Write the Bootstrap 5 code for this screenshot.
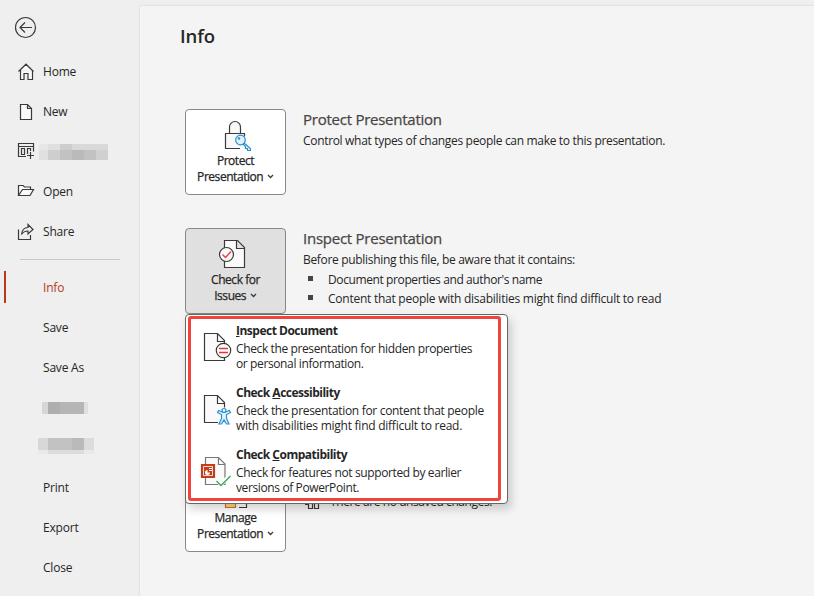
<!DOCTYPE html>
<html lang="en">
<head>
<meta charset="utf-8">
<meta name="viewport" content="width=device-width, initial-scale=1">
<title>Info</title>
<link href="https://cdn.jsdelivr.net/npm/bootstrap@5.3.0/dist/css/bootstrap.min.css" rel="stylesheet">
<style>
body{font-family:"Open Sans","Noto Sans",sans-serif;font-size:12px;line-height:16px;color:#262626;background:#efefef;letter-spacing:-.2px;height:596px;overflow:hidden}
svg{display:block;fill:none;stroke:#3b3a39;stroke-width:1.2;flex:none}
.side{width:140px;height:596px;flex:none}
.back{padding:16px 0 0 14px;height:52px}
.side .nav-link{height:40px;padding:0 0 0 17px;color:#262626;display:flex;align-items:center;gap:8px;line-height:16px}
.side .plain{padding-left:43px}
.side .active{color:#b7391a;position:relative}
.side .active::before{content:"";position:absolute;left:4px;top:3px;width:2px;height:32px;background:#b7391a}
.rule{height:1px;background:#c8c8c8;margin:7px 20px 8px}
.mosaic{stroke:none}
.pane{margin-top:6px;background:#f4f4f4;box-shadow:0 0 2px #c9c9c9;height:590px;padding-left:45px;position:relative}
.title{font-size:18.5px;line-height:26px;font-weight:600;margin:0 0 0 -5px;padding-top:17px;letter-spacing:-.1px;height:103px}
.section{height:119px;gap:17px}
.section.last{margin-top:119px}
.tile{width:101px;height:86px;flex:none;border:1px solid #8a8886;border-radius:4px;background:#fff;padding:1px 0 0;font-size:12px;line-height:16px;-webkit-text-stroke:.25px #262626;color:#262626;letter-spacing:-.45px}
.tile svg{margin:0 auto 2px}
.tile.pressed{background:#e0e0e0}
.tile .caret{display:inline-block;margin:0 0 2px 1px;stroke-width:1.3}
.heading{font-size:15px;line-height:20px;font-weight:400;-webkit-text-stroke:.25px #484644;color:#484644;margin:0 0 4px;letter-spacing:-.25px}
.facts{margin:2px 0 0;padding:0;list-style:none}
.facts li{line-height:19px;display:flex;align-items:center}
.facts li::before{content:"";width:5px;height:5px;background:#444;margin:0 15px 3px 5px}
.popup{position:absolute;left:45px;top:308px;width:323px;height:190px;border:1px solid #666;border-radius:4px;background:#fff;padding:1px 6px 2px 2px;box-shadow:3px 5px 10px rgba(0,0,0,.18)}
.frame{height:185px;border:3px solid #f0433a;border-radius:3px}
.choice{height:62px;padding:4px 0 0 9px;gap:4px;line-height:15px}
.choice strong{font-weight:700;display:block;line-height:16px;margin-bottom:2px;letter-spacing:-.5px}
.choice p{margin:0;white-space:nowrap;letter-spacing:-.38px}
.snug{letter-spacing:-.25px}
.tight{letter-spacing:-.32px}
.tighter{letter-spacing:-.39px}
.unsaved{padding:28px 0 0 1px;gap:10px;letter-spacing:-.42px}
</style>
<script src="https://cdn.jsdelivr.net/npm/bootstrap@5.3.0/dist/js/bootstrap.bundle.min.js"></script>
</head>
<body>
<div class="d-flex">
<aside class="side">
  <div class="back"><svg width="23" height="23"><circle cx="11.5" cy="11.5" r="10"/><path d="M18 11.5H6.5M11 6.5l-5 5 5 5"/></svg></div>
  <nav class="nav flex-column flex-nowrap">
    <a class="nav-link" href="#"><svg width="18" height="18"><path fill="#fafafa" d="M1.500 8.500 9 1.200l7.500 7.300M3.500 7v9.500H7v-6h4v6h4.500V7"/></svg>Home</a>
    <a class="nav-link" href="#"><svg width="18" height="18"><path fill="#fafafa" d="M3.500 1.500h7l4 4v11h-11zM10.500 1.500v4h4"/></svg>New</a>
    <a class="nav-link" href="#" aria-label="Template"><svg width="18" height="18" class="mb-1"><path d="M9 15.500H1.500v-13h15v8M1.500 5.500h15M4.500 7.500h3v6h-3zM10.500 13v-5.500h3V10M13.500 11v7M10 14.500h7"/></svg><svg class="mosaic" width="69" height="16" style="margin-left:-4px" shape-rendering="crispEdges"><path fill="#e7e7e7" d="M0 0h9v6H0z"/><path fill="#dfdfdf" d="M9 0h12v6H9z"/><path fill="#cdcdcd" d="M21 0h12v6H21z"/><path fill="#d9d9d9" d="M33 0h36v6H33z"/><path fill="#e0e0e0" d="M0 6h9v10H0z"/><path fill="#cecece" d="M9 6h12v10H9z"/><path fill="#c2c2c2" d="M21 6h12v10H21zM45 6h12v10H45z"/><path fill="#bababa" d="M33 6h12v10H33z"/><path fill="#d0d0d0" d="M57 6h12v10H57z"/></svg></a>
    <a class="nav-link" href="#"><svg width="18" height="18" class="mb-1"><path fill="#fafafa" d="M1.500 14V4.500H6l1.500 1.500h6v2.500M1.500 14.500l4-6h11l-3.500 6z"/></svg>Open</a>
    <a class="nav-link" href="#"><svg width="18" height="18"><path d="M1.500 6.500v10h12V12M4.500 11.500C5 7 7.500 4.500 11 4.500v-3l5 5-5 4.500V8c-3 0-5 1-6.500 3.500z"/></svg>Share</a>
    <div class="rule"></div>
    <a class="nav-link plain active" href="#">Info</a>
    <a class="nav-link plain" href="#">Save</a>
    <a class="nav-link plain" href="#">Save As</a>
    <a class="nav-link plain" href="#" aria-label="History"><svg class="mosaic" width="46" height="12" style="margin-left:-1px" shape-rendering="crispEdges"><path fill="#d6d6d6" d="M0 0h6v12H0z"/><path fill="#aeaeae" d="M6 0h12v12H6z"/><path fill="#b5b5b5" d="M18 0h24v12H18z"/><path fill="#e0e0e0" d="M42 0h4v12h-4z"/></svg></a>
    <a class="nav-link plain" href="#" aria-label="Save copy"><svg class="mosaic" width="56" height="16" style="margin:-4px 0 0 -5px" shape-rendering="crispEdges"><path fill="#d8d8d8" d="M0 0h10v12H0z"/><path fill="#c2c2c2" d="M10 0h24v12H10z"/><path fill="#bababa" d="M34 0h12v12H34z"/><path fill="#dcdcdc" d="M46 0h10v12H46zM10 12h36v4H10z"/><path fill="#e9e9e9" d="M0 12h10v4H0zM46 12h10v4H46z"/></svg></a>
    <a class="nav-link plain" href="#">Print</a>
    <a class="nav-link plain" href="#">Export</a>
    <a class="nav-link plain" href="#">Close</a>
  </nav>
</aside>
<main class="pane flex-grow-1">
  <h1 class="title">Info</h1>
  <section class="section d-flex">
    <button class="tile"><svg width="30" height="31"><path fill="#f8f8f8" d="M19 28.500H4.500v-15h19v3M8.500 13V7a5.500 5.500 0 0 1 11 0v6"/><g stroke="#2b8fd0"><path fill="#e3f1fb" d="M22.500 22.500l7 6v2h-3v-2h-2v-2l-3-3"/><circle cx="19.500" cy="20" r="4.800" fill="#e3f1fb"/><circle cx="18" cy="18.500" r=".7"/></g></svg>Protect<br>Presentation <svg class="caret" width="7" height="5"><path d="M1 1l2.500 2.500L6 1"/></svg></button>
    <div><h2 class="heading">Protect Presentation</h2><div class="tight">Control what types of changes people can make to this presentation.</div></div>
  </section>
  <section class="section d-flex">
    <button class="tile pressed"><svg width="42" height="31"><path fill="#fafafa" d="M9.500 1.500h13l7 7v20h-20zM21.500 1.500v8h8"/><circle cx="11.500" cy="15.500" r="7" fill="#fafafa"/><path stroke="#f03a4a" stroke-width="1.400" d="M7.500 15.500l3 3 5.500-6"/></svg>Check for<br>Issues <svg class="caret" width="7" height="5"><path d="M1 1l2.500 2.500L6 1"/></svg></button>
    <div><h2 class="heading">Inspect Presentation</h2><div class="tight">Before publishing this file, be aware that it contains:</div>
      <ul class="facts"><li class="tighter">Document properties and author's name</li><li class="snug">Content that people with disabilities might find difficult to read</li></ul></div>
  </section>
  <section class="section last d-flex">
    <button class="tile"><svg width="34" height="31"><path d="M18 8h9.500v22.500H20"/><path stroke="#d47a12" fill="#fbd695" d="M6.500 8h10v22.500h-10z"/></svg>Manage<br>Presentation <svg class="caret" width="7" height="5"><path d="M1 1l2.500 2.500L6 1"/></svg></button>
    <div class="unsaved d-flex"><svg width="16" height="16"><path d="M1 10.500h3M4.500 3v11.500h4V3M10.500 5.500h4v9h-4z"/></svg><span>There are no unsaved changes.</span></div>
  </section>
  <div class="popup"><div class="frame">
    <div class="choice d-flex"><svg width="32" height="39"><path fill="#fafafa" d="M4.500 10.500h13l7 7v20h-20zM17.500 10.500v8h7"/><circle cx="23.500" cy="27.500" r="7.200" fill="#fff"/><path stroke="#e8333c" stroke-width="1.400" d="M19 25.500h9M19 29.500h9"/></svg><div><strong><u>I</u>nspect Document</strong><p>Check the presentation for hidden properties<br>or personal information.</p></div></div>
    <div class="choice d-flex"><svg width="32" height="40"><path fill="#fafafa" d="M18 37.500H4.500v-27h13l7 7v5M17.500 10.500v8h7"/><g stroke="#2b8fd0" fill="#e3f1fb"><path d="M17.500 27.500l4 2v4l-2.500 5.500h2.500l2.500-4 2.500 4H29l-2.500-5.500v-4l4-2-1-2-4 1.500h-3l-4-1.500z"/><circle cx="24" cy="25.500" r="2"/></g></svg><div><strong>Check <u>A</u>ccessibility</strong><p><span class="tight">Check the presentation for content that people</span><br><span class="snug">with disabilities might find difficult to read.</span></p></div></div>
    <div class="choice d-flex"><svg width="32" height="40"><path stroke="#777" fill="#fafafa" d="M5.500 10.500h13l6.500 6.500v20.500H5.500zM18.500 10.500v7h6.500"/><path fill="#c43e1c" stroke="#c43e1c" d="M1.500 17.500h13v13h-13z"/><path stroke="#fff" stroke-width=".8" d="M3.500 19.500h9v9h-9z"/><path fill="#fff" stroke="none" d="M7.500 23v2.500H10a2.500 2.500 0 1 1-2.500-2.500zM9 21h3v1H9zM9 23h3v1H9z"/><path stroke="#fff" stroke-width="4" d="M17 33.500l4 4 9-9"/><path stroke="#3ba55d" stroke-width="1.400" d="M16.500 34l4.500 4.500 9.500-9.500"/></svg><div><strong>Check <u>C</u>ompatibility</strong><p>Check for features not supported by earlier<br>versions of PowerPoint.</p></div></div>
  </div></div>
</main>
</div>
</body>
</html>
